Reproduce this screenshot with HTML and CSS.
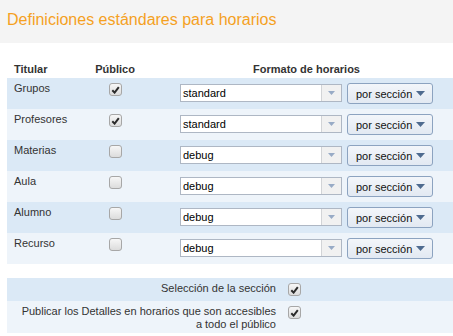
FILE: index.html
```html
<!DOCTYPE html>
<html lang="es">
<head>
  <meta charset="UTF-8" />
  <title>Definiciones estándares para horarios</title>
  <link rel="stylesheet" href="styles.css">
</head>
<body>
  <div class="page-title">
    <h1>Definiciones estándares para horarios</h1>
  </div>

  <div class="settings">
    <table class="formats">
      <colgroup>
        <col class="col-owner">
        <col class="col-public">
        <col class="col-format">
        <col>
      </colgroup>
      <thead>
        <tr>
          <th>Titular</th>
          <th class="th-center">Público</th>
          <th class="th-format">Formato de horarios</th>
          <th></th>
        </tr>
      </thead>
      <tbody>
        <tr>
          <td class="cell-name">Grupos</td>
          <td class="cell-check"><span class="checkbox checked"><svg viewBox="0 0 9 8" width="9" height="8"><path d="M1.3 4.3 L3.6 6.6 L7.8 1.2" /></svg></span></td>
          <td class="cell-format">
            <div class="format-controls">
              <div class="combo"><span class="combo-text">standard</span><span class="combo-arrow"><svg viewBox="0 0 7 4" width="7" height="4"><path d="M0 0 H7 L3.5 4 Z" /></svg></span></div>
              <button class="section-btn">por sección <svg viewBox="0 0 9 5" width="9" height="5"><path d="M0 0 H9 L4.5 5 Z" /></svg></button>
            </div>
          </td>
          <td></td>
        </tr>
        <tr>
          <td class="cell-name">Profesores</td>
          <td class="cell-check"><span class="checkbox checked"><svg viewBox="0 0 9 8" width="9" height="8"><path d="M1.3 4.3 L3.6 6.6 L7.8 1.2" /></svg></span></td>
          <td class="cell-format">
            <div class="format-controls">
              <div class="combo"><span class="combo-text">standard</span><span class="combo-arrow"><svg viewBox="0 0 7 4" width="7" height="4"><path d="M0 0 H7 L3.5 4 Z" /></svg></span></div>
              <button class="section-btn">por sección <svg viewBox="0 0 9 5" width="9" height="5"><path d="M0 0 H9 L4.5 5 Z" /></svg></button>
            </div>
          </td>
          <td></td>
        </tr>
        <tr>
          <td class="cell-name">Materias</td>
          <td class="cell-check"><span class="checkbox"></span></td>
          <td class="cell-format">
            <div class="format-controls">
              <div class="combo"><span class="combo-text">debug</span><span class="combo-arrow"><svg viewBox="0 0 7 4" width="7" height="4"><path d="M0 0 H7 L3.5 4 Z" /></svg></span></div>
              <button class="section-btn">por sección <svg viewBox="0 0 9 5" width="9" height="5"><path d="M0 0 H9 L4.5 5 Z" /></svg></button>
            </div>
          </td>
          <td></td>
        </tr>
        <tr>
          <td class="cell-name">Aula</td>
          <td class="cell-check"><span class="checkbox"></span></td>
          <td class="cell-format">
            <div class="format-controls">
              <div class="combo"><span class="combo-text">debug</span><span class="combo-arrow"><svg viewBox="0 0 7 4" width="7" height="4"><path d="M0 0 H7 L3.5 4 Z" /></svg></span></div>
              <button class="section-btn">por sección <svg viewBox="0 0 9 5" width="9" height="5"><path d="M0 0 H9 L4.5 5 Z" /></svg></button>
            </div>
          </td>
          <td></td>
        </tr>
        <tr>
          <td class="cell-name">Alumno</td>
          <td class="cell-check"><span class="checkbox"></span></td>
          <td class="cell-format">
            <div class="format-controls">
              <div class="combo"><span class="combo-text">debug</span><span class="combo-arrow"><svg viewBox="0 0 7 4" width="7" height="4"><path d="M0 0 H7 L3.5 4 Z" /></svg></span></div>
              <button class="section-btn">por sección <svg viewBox="0 0 9 5" width="9" height="5"><path d="M0 0 H9 L4.5 5 Z" /></svg></button>
            </div>
          </td>
          <td></td>
        </tr>
        <tr>
          <td class="cell-name">Recurso</td>
          <td class="cell-check"><span class="checkbox"></span></td>
          <td class="cell-format">
            <div class="format-controls">
              <div class="combo"><span class="combo-text">debug</span><span class="combo-arrow"><svg viewBox="0 0 7 4" width="7" height="4"><path d="M0 0 H7 L3.5 4 Z" /></svg></span></div>
              <button class="section-btn">por sección <svg viewBox="0 0 9 5" width="9" height="5"><path d="M0 0 H9 L4.5 5 Z" /></svg></button>
            </div>
          </td>
          <td></td>
        </tr>
      </tbody>
    </table>

    <table class="options">
      <colgroup>
        <col class="col-label">
        <col>
      </colgroup>
      <tr class="row-single">
        <td class="opt-label">Selección de la sección</td>
        <td class="opt-check"><span class="checkbox checked"><svg viewBox="0 0 9 8" width="9" height="8"><path d="M1.3 4.3 L3.6 6.6 L7.8 1.2" /></svg></span></td>
      </tr>
      <tr class="row-double">
        <td class="opt-label">Publicar los Detalles en horarios que son accesibles<br>a todo el público</td>
        <td class="opt-check"><span class="checkbox checked"><svg viewBox="0 0 9 8" width="9" height="8"><path d="M1.3 4.3 L3.6 6.6 L7.8 1.2" /></svg></span></td>
      </tr>
    </table>
  </div>
</body>
</html>
```

FILE: styles.css
```css
:root {
  --title-color: #f5a11f;
  --row-dark: #dbe9f6;
  --row-light: #eef4fa;
  --text: #333;
}

body {
  margin: 0;
  font-family: "Liberation Sans", Arial, sans-serif;
  font-size: 11px;
  line-height: 13px;
  color: var(--text);
  background: #fff;
  overflow: hidden;
}

.page-title {
  background: #f4f4f4;
  height: 43px;
  box-sizing: border-box;
  padding: 11px 7px 0;
}

.page-title h1 {
  margin: 0;
  font-size: 16px;
  line-height: 18px;
  font-weight: normal;
  color: var(--title-color);
}

.settings {
  padding: 17px 0 0 7px;
}

table {
  border-collapse: collapse;
  border-spacing: 0;
  width: 100%;
  table-layout: fixed;
}

td, th {
  padding: 0;
}

.col-owner { width: 83px; }
.col-public { width: 50px; }
.col-format { width: 298px; }

.formats th {
  height: 18px;
  text-align: left;
  vertical-align: middle;
  padding-left: 7px;
  font-weight: bold;
  color: var(--text);
}

.formats th.th-center {
  text-align: center;
  padding-left: 0;
}

.formats th.th-format {
  text-align: center;
  padding: 0 5px 0 40px;
}

.formats tbody tr {
  height: 31px;
}

.formats tbody tr:nth-child(odd) { background: var(--row-dark); }
.formats tbody tr:nth-child(even) { background: var(--row-light); }

.formats td {
  vertical-align: top;
}

.cell-name {
  padding: 4px 0 0 7px;
}

.cell-check {
  padding-top: 5px;
  text-align: center;
}

.cell-format {
  padding: 5px 5px 0 40px;
}

.format-controls {
  display: flex;
  align-items: flex-start;
  gap: 5px;
}

/* fake combo box */
.combo {
  display: flex;
  width: 162px;
  height: 18px;
  margin-top: 1px;
  box-sizing: border-box;
  border: 1px solid #aeb7c4;
  background: #fff;
}

.combo-text {
  flex: 1;
  padding-left: 2px;
  line-height: 16px;
  color: #000;
}

.combo-arrow {
  width: 19px;
  border-left: 1px solid #d2d4d7;
  background: #f1f1f1;
  display: flex;
  align-items: center;
  justify-content: center;
}

.combo-arrow svg { fill: #98abc6; }

.section-btn {
  display: flex;
  align-items: center;
  justify-content: space-between;
  width: 86px;
  height: 21px;
  box-sizing: border-box;
  padding: 0 7px 0 8px;
  border: 1px solid #8ca3c0;
  border-radius: 3px;
  background: linear-gradient(#f3f6fa, #e2e9f2);
  font-family: inherit;
  font-size: 11px;
  color: #111;
  cursor: pointer;
}

.section-btn svg { fill: #4f6b8f; }

/* checkbox */
.checkbox {
  display: inline-flex;
  align-items: center;
  justify-content: center;
  width: 13px;
  height: 13px;
  box-sizing: border-box;
  border: 1px solid #a7a7a7;
  border-radius: 3px;
  background: linear-gradient(#f7f7f7, #dcdcdc);
  vertical-align: top;
}

.checkbox svg path {
  fill: none;
  stroke: #2b2b2b;
  stroke-width: 2;
}

/* bottom options */
.options {
  margin-top: 14px;
}

.col-label { width: 274px; }

.options tr:nth-child(odd) { background: var(--row-dark); }
.options tr:nth-child(even) { background: var(--row-light); }

.options td {
  vertical-align: top;
}

.opt-label {
  text-align: right;
  padding-right: 5px;
}

.row-single .opt-label { padding-top: 4px; padding-bottom: 6px; }
.row-double .opt-label { padding-top: 4px; padding-bottom: 2px; }

.opt-check {
  padding: 5px 0 0 7px;
}
```
